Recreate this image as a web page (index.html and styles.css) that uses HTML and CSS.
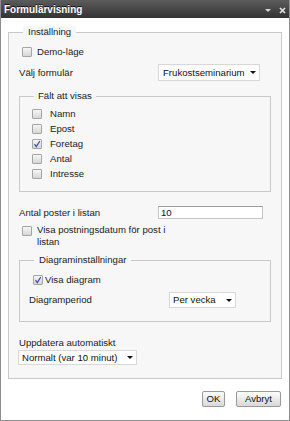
FILE: index.html
```html
<!DOCTYPE html>
<html lang="sv">
	<head>
		<meta charset="UTF-8" />
		<meta name="viewport" content="width=device-width, initial-scale=1.0" />
		<title>Formulärvisning</title>
		<link rel="stylesheet" href="styles.css">
	</head>
	<body>
		<div class="window">
			<div class="titlebar">
				<span class="title">Formulärvisning</span>
				<span class="tools">
					<svg width="6" height="3" viewBox="0 0 6 3"><path d="M0 0h6L3 3z" fill="#d6d6d6" /></svg>
					<svg width="7" height="7" viewBox="0 0 7 7"><path d="M1 1l5 5M6 1L1 6" stroke="#e2e2e2" stroke-width="1.7" /></svg>
				</span>
			</div>

			<div class="content">
				<fieldset class="group main">
					<legend>Inställning</legend>
					<label class="check demo"><span class="box"></span>Demo-läge</label>

					<div class="field">
						<span>Välj formulär</span>
						<span class="select form-select">Frukostseminarium<i class="arrow"></i></span>
					</div>

					<fieldset class="group sub fields">
						<legend>Fält att visas</legend>
						<label class="check"><span class="box"></span>Namn</label>
						<label class="check"><span class="box"></span>Epost</label>
						<label class="check"><span class="box checked"><svg width="8" height="8" viewBox="0 0 8 8"><path d="M1.5 4.2L3.3 6.6L6.8 1" fill="none" stroke="#3e4f9e" stroke-width="1.2" /></svg></span>Foretag</label>
						<label class="check"><span class="box"></span>Antal</label>
						<label class="check"><span class="box"></span>Intresse</label>
					</fieldset>

					<div class="field count">
						<span>Antal poster i listan</span>
						<span class="input">10</span>
					</div>

					<label class="check wrap"><span class="box"></span><span class="text">Visa postningsdatum för post i listan</span></label>

					<fieldset class="group sub diagram">
						<legend>Diagraminställningar</legend>
						<label class="check"><span class="box checked"><svg width="8" height="8" viewBox="0 0 8 8"><path d="M1.5 4.2L3.3 6.6L6.8 1" fill="none" stroke="#3e4f9e" stroke-width="1.2" /></svg></span>Visa diagram</label>
						<div class="field">
							<span>Diagramperiod</span>
							<span class="select period">Per vecka<i class="arrow"></i></span>
						</div>
					</fieldset>

					<div class="refresh">
						<div>Uppdatera automatiskt</div>
						<span class="select interval">Normalt (var 10 minut)<i class="arrow"></i></span>
					</div>
				</fieldset>

				<div class="buttons">
					<button class="ok">OK</button>
					<button class="cancel">Avbryt</button>
				</div>
			</div>
		</div>
	</body>
</html>
```

FILE: styles.css
```css
body {
	margin: 0;
	font-family: 'Liberation Sans', Arial, sans-serif;
	font-size: 9.6px;
	line-height: 12px;
	color: #222222;
	background-color: #ffffff;
}

.window {
	width: 290px;
	height: 421px;
	box-sizing: border-box;
	border: 1px solid #8e8e8e;
	border-top: 0;
}

.titlebar {
	height: 18px;
	box-sizing: border-box;
	padding: 3px 3px 0 3px;
	display: flex;
	justify-content: space-between;
	background: linear-gradient(#5c5c5c, #333333);
	color: #ffffff;
	font-weight: bold;
	font-size: 10px;
	line-height: 14px;
	text-shadow: 0 -1px 0 #111111;
}

.tools {
	display: flex;
	align-items: center;
	gap: 8px;
}

.tools svg {
	display: block;
}

.content {
	padding: 8px 7px 0 7px;
}

fieldset.group {
	margin: 0;
	min-width: 0;
	border: 1px solid #c9c9c9;
	padding: 8px 10px 13px 10px;
	background-color: #f7f7f7;
}

legend {
	margin-left: 4px;
	padding: 0 5px;
	line-height: 12px;
	background-color: #f7f7f7;
}

.check {
	display: flex;
	align-items: center;
	height: 12px;
}

.box {
	flex: none;
	width: 10px;
	height: 10px;
	box-sizing: border-box;
	margin: 0 5px 0 3px;
	border: 1px solid #a5a5a5;
	border-radius: 1px;
	background: linear-gradient(#f6f6f6, #d6d6d6);
}

.box svg {
	display: block;
}

.field {
	display: grid;
	grid-template-columns: 139px auto;
	align-items: center;
	margin-top: 6px;
}

.select {
	justify-self: start;
	display: inline-flex;
	align-items: center;
	justify-content: space-between;
	box-sizing: border-box;
	height: 17px;
	padding: 0 3px 0 4px;
	border: 1px solid #d8d8d8;
	background-color: #ffffff;
	color: #111111;
}

.arrow {
	width: 0;
	height: 0;
	border-left: 3px solid transparent;
	border-right: 3px solid transparent;
	border-top: 3px solid #111111;
}

.form-select {
	width: 102px;
}

/* Fält att visas */
fieldset.sub {
	padding: 6px 10px 11px 9px;
	background-color: transparent;
}

fieldset.fields {
	margin-top: 9px;
}

fieldset.sub legend {
	margin-left: 5px;
	padding: 0 4px;
}

.fields .check + .check {
	margin-top: 3px;
}

.fields .box {
	margin-right: 8px;
}

.count {
	margin-top: 14px;
}

.input {
	box-sizing: border-box;
	width: 105px;
	height: 13px;
	padding-left: 2px;
	line-height: 11px;
	border: 1px solid #c6c6c6;
	border-top-color: #9e9e9e;
	background-color: #ffffff;
	color: #111111;
}

.wrap {
	height: auto;
	align-items: flex-start;
	margin-top: 5px;
}

.wrap .box {
	margin-top: 2px;
}

.wrap .text {
	width: 142px;
}

/* Diagraminställningar */
fieldset.diagram {
	margin-top: 6px;
	padding: 8px 10px 13px 9px;
}

fieldset.diagram legend {
	padding: 0 5px;
}

.diagram .box {
	margin: 0 2px 0 4px;
}

.diagram .field {
	grid-template-columns: 140px auto;
}

.period {
	width: 67px;
	height: 16px;
	padding-left: 3px;
}

.refresh {
	margin-top: 15px;
}

.interval {
	width: 119px;
	height: 15px;
	margin: 1px 0 0 -1px;
	padding-left: 3px;
}

.buttons {
	display: flex;
	justify-content: flex-end;
	gap: 11px;
	margin: 12px 1px 0 0;
}

button {
	height: 16px;
	padding: 0;
	font: inherit;
	color: #111111;
	border: 1px solid #9a9a9a;
	border-radius: 2px;
	background: linear-gradient(#fdfdfd, #d8d8d8);
}

.ok {
	width: 23px;
}

.cancel {
	width: 45px;
}
```
